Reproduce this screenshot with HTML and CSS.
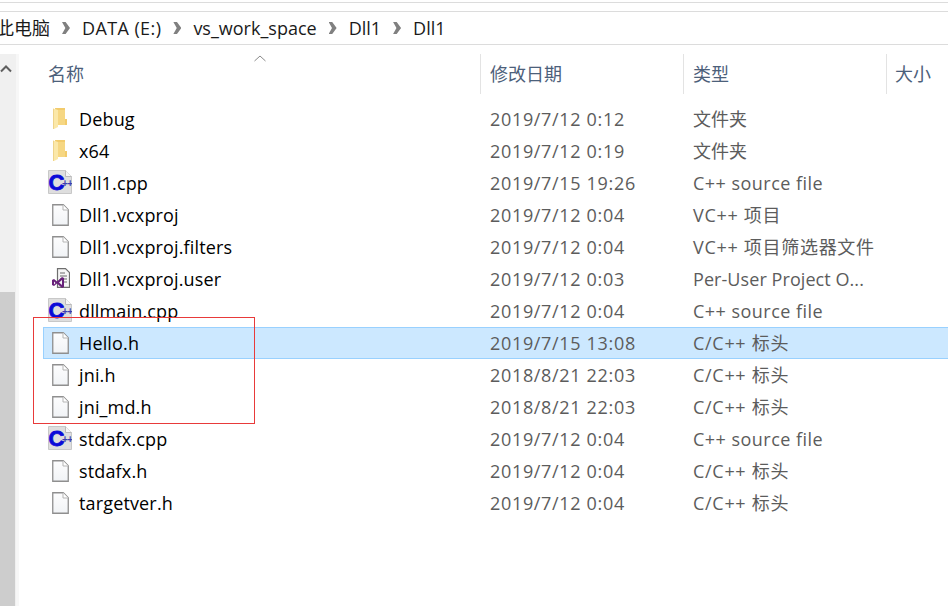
FILE: index.html
```html
<!DOCTYPE html>
<html lang="zh-CN">
<head>
<meta charset="utf-8">
<title>Dll1</title>
<link rel="stylesheet" href="styles.css">
</head>
<body>
<svg class="defs" width="0" height="0" aria-hidden="true">
  <defs>
    <linearGradient id="g-file" x1="0" y1="0" x2="0" y2="1">
      <stop offset="0" stop-color="#fdfdfe"/>
      <stop offset="1" stop-color="#f1f3f6"/>
    </linearGradient>
    <symbol id="i-folder" viewBox="0 0 14 21">
      <path d="M2 0h10v11h2v6H4z" fill="#f2cb6c"/>
      <path d="M5 2h7v15H5z" fill="#f6d783"/>
      <path d="M0 .5L5 2v17l-4 2H0z" fill="#fbe8a9"/>
      <path d="M0 .5L1 1v20H0z" fill="#efd48a"/>
    </symbol>
    <symbol id="i-file" viewBox="0 0 17 22">
      <path d="M.75 .75h10.500l5 5v15.500H.75z" fill="url(#g-file)" stroke="#8f8f8f" stroke-width="1.300"/>
      <path d="M11 .75v5.250h5.250" fill="#fff" stroke="#b5b5b5"/>
    </symbol>
    <symbol id="i-cpp" viewBox="0 0 24 24">
      <path d="M.5 .5h17l6 6v17H.5z" fill="#dedede" stroke="#c8c8c8"/>
      <path d="M17.500 .5v6h6" fill="#f6f6f6" stroke="#bbb"/>
      <text x="0.500" y="20" class="cpp-c">C</text>
      <text x="14" y="16.500" class="cpp-p">++</text>
    </symbol>
    <symbol id="i-user" viewBox="0 0 18 20">
      <path d="M5.500 .6h8l4 4v14.800h-12z" fill="#f6f6f6" stroke="#6e6e6e" stroke-width="1.200"/>
      <path d="M8 5h5M8 8h7M8 11h7M10 14h5" stroke="#6a6a6a" stroke-width="1.200"/>
      <path fill-rule="evenodd" fill="#68217a" d="M0 12l2-1 3 2.500 5-4.500 2 1v9l-2 1-5-4.500-3 2.500-2-1zM2 13.500v3l1.500-1.500zM10 12l-3 2.500 3 2.500z"/>
    </symbol>
  </defs>
</svg>

<div class="topstrip"></div>

<nav class="breadcrumb">
  <span class="crumb crumb-first">此电脑</span><span class="chev"></span>
  <span class="crumb crumb-drive">DATA (E:)</span><span class="chev"></span>
  <span class="crumb">vs_work_space</span><span class="chev"></span>
  <span class="crumb">Dll1</span><span class="chev"></span>
  <span class="crumb">Dll1</span>
</nav>

<div class="pane">
  <aside class="scrollbar">
    <div class="scroll-up"><svg width="12" height="8" viewBox="0 0 12 8"><path d="M1 6.500l5-5 5 5" fill="none" stroke="#5f5f5f" stroke-width="2"/></svg></div>
    <div class="scroll-track"></div>
    <div class="scroll-thumb"></div>
  </aside>
  <div class="gutter"></div>
  <main class="list">
    <div class="header">
      <div class="col col-name">名称</div>
      <div class="col col-date">修改日期</div>
      <div class="col col-type">类型</div>
      <div class="col col-size">大小</div>
    </div>
    <div class="rows">
      <div class="row"><span class="cell-name"><svg class="ic ic-folder"><use href="#i-folder"/></svg>Debug</span><span class="cell-date">2019/7/12 0:12</span><span class="cell-type type-cjk">文件夹</span></div>
      <div class="row"><span class="cell-name"><svg class="ic ic-folder"><use href="#i-folder"/></svg>x64</span><span class="cell-date">2019/7/12 0:19</span><span class="cell-type type-cjk">文件夹</span></div>
      <div class="row"><span class="cell-name"><svg class="ic ic-cpp"><use href="#i-cpp"/></svg>Dll1.cpp</span><span class="cell-date">2019/7/15 19:26</span><span class="cell-type">C++ source file</span></div>
      <div class="row"><span class="cell-name"><svg class="ic ic-file"><use href="#i-file"/></svg>Dll1.vcxproj</span><span class="cell-date">2019/7/12 0:04</span><span class="cell-type type-mixed">VC++ 项目</span></div>
      <div class="row"><span class="cell-name"><svg class="ic ic-file"><use href="#i-file"/></svg>Dll1.vcxproj.filters</span><span class="cell-date">2019/7/12 0:04</span><span class="cell-type type-mixed">VC++ 项目筛选器文件</span></div>
      <div class="row"><span class="cell-name"><svg class="ic ic-user"><use href="#i-user"/></svg>Dll1.vcxproj.user</span><span class="cell-date">2019/7/12 0:03</span><span class="cell-type type-tight">Per-User Project O...</span></div>
      <div class="row"><span class="cell-name"><svg class="ic ic-cpp"><use href="#i-cpp"/></svg>dllmain.cpp</span><span class="cell-date">2019/7/12 0:04</span><span class="cell-type">C++ source file</span></div>
      <div class="row row-selected"><span class="cell-name"><svg class="ic ic-file"><use href="#i-file"/></svg>Hello.h</span><span class="cell-date">2019/7/15 13:08</span><span class="cell-type type-mixed">C/C++ 标头</span></div>
      <div class="row"><span class="cell-name"><svg class="ic ic-file"><use href="#i-file"/></svg>jni.h</span><span class="cell-date">2018/8/21 22:03</span><span class="cell-type type-mixed">C/C++ 标头</span></div>
      <div class="row"><span class="cell-name"><svg class="ic ic-file"><use href="#i-file"/></svg>jni_md.h</span><span class="cell-date">2018/8/21 22:03</span><span class="cell-type type-mixed">C/C++ 标头</span></div>
      <div class="row"><span class="cell-name"><svg class="ic ic-cpp"><use href="#i-cpp"/></svg>stdafx.cpp</span><span class="cell-date">2019/7/12 0:04</span><span class="cell-type">C++ source file</span></div>
      <div class="row"><span class="cell-name"><svg class="ic ic-file"><use href="#i-file"/></svg>stdafx.h</span><span class="cell-date">2019/7/12 0:04</span><span class="cell-type type-mixed">C/C++ 标头</span></div>
      <div class="row"><span class="cell-name"><svg class="ic ic-file"><use href="#i-file"/></svg>targetver.h</span><span class="cell-date">2019/7/12 0:04</span><span class="cell-type type-mixed">C/C++ 标头</span></div>
    </div>
  </main>
</div>

<svg class="sort-arrow" width="12" height="7" viewBox="0 0 12 7"><path d="M.5 6l5.500-5 5.500 5" fill="none" stroke="#8a8a8a"/></svg>
<div class="annotation"></div>
</body>
</html>
```
FILE: styles.css
```css
* { box-sizing: border-box; }
html, body { margin: 0; padding: 0; }
body {
  width: 948px;
  height: 606px;
  overflow: hidden;
  background: #fff;
  position: relative;
  font-family: "Open Sans", "Noto Sans CJK SC", sans-serif;
  font-size: 18px;
  color: #000;
}
.defs { position: absolute; }
.topstrip {
  height: 10px;
  margin-top: 2px;
  border-top: 1px solid #dcdcdc;
  border-bottom: 1px solid #dcdcdc;
}
.breadcrumb {
  height: 33px;
  border-bottom: 1px solid #dcdcdc;
  display: flex;
  align-items: center;
  line-height: 30px;
  color: #1a1a1a;
}
.crumb-first { margin-left: -4px; }
.crumb-drive { letter-spacing: .4px; }
.chev {
  width: 8px;
  height: 12px;
  margin: 0 12px 0 12px;
  background: #808080;
  clip-path: polygon(0 0, 45% 0, 100% 50%, 45% 100%, 0 100%, 42% 50%);
}
.pane { display: flex; height: 561px; }
.scrollbar {
  width: 16px;
  margin-top: 9px;
  background: #f0f0f0;
  display: flex;
  flex-direction: column;
}
.scroll-up { height: 24px; display: flex; justify-content: center; padding-top: 11px; margin-left: -4px; }
.scroll-track { height: 214px; }
.scroll-thumb { flex: 1; background: #cdcdcd; margin-right: 1px; }
.gutter { width: 3px; background: #f7f7f7; margin-top: 9px; }
.list { flex: 1; min-width: 0; padding: 9px 0 0 24px; }
.header { display: flex; height: 40px; color: #4c607a; }
.col { line-height: 40px; padding-left: 9px; border-left: 1px solid #e3e3e3; flex: none; }
.col-name { width: 437px; border-left: 0; padding-left: 5px; }
.col-date { width: 203px; }
.col-type { width: 203px; padding-left: 9px; }
.col-size { width: 62px; padding-left: 8px; }
.rows { padding-top: 9px; }
.row {
  display: flex;
  height: 32px;
  line-height: 30px;
  border: 1px solid transparent;
  border-right: 0;
  color: #5c5c5c;
}
.row-selected { background: #cce8ff; border-color: #99d1ff; }
.cell-name { width: 446px; padding-left: 35px; position: relative; color: #000; flex: none; letter-spacing: .15px; }
.cell-date { width: 203px; flex: none; letter-spacing: .67px; }
.cell-type { flex: 1; white-space: nowrap; letter-spacing: .47px; }
.cell-type.type-cjk { letter-spacing: 0; }
.cell-type.type-mixed { letter-spacing: .7px; }
.cell-type.type-tight { letter-spacing: .07px; }
.ic { position: absolute; }
.ic-folder { left: 9px; top: 4px; width: 14px; height: 21px; }
.ic-file { left: 8px; top: 4px; width: 17px; height: 22px; }
.ic-cpp { left: 4px; top: 2px; width: 24px; height: 24px; }
.ic-user { left: 8px; top: 4px; width: 18px; height: 20px; }
.cpp-c { font: 900 22px "Liberation Sans", sans-serif; fill: #0a0ad8; stroke: #0a0ad8; stroke-width: .8px; }
.cpp-p { font: 900 10px "Liberation Sans", sans-serif; fill: #3f3fb0; letter-spacing: -.5px; }
.sort-arrow { position: absolute; left: 254px; top: 55px; }
.annotation {
  position: absolute;
  left: 33px;
  top: 317px;
  width: 222px;
  height: 107px;
  border: 1px solid #e83a3a;
}
```
